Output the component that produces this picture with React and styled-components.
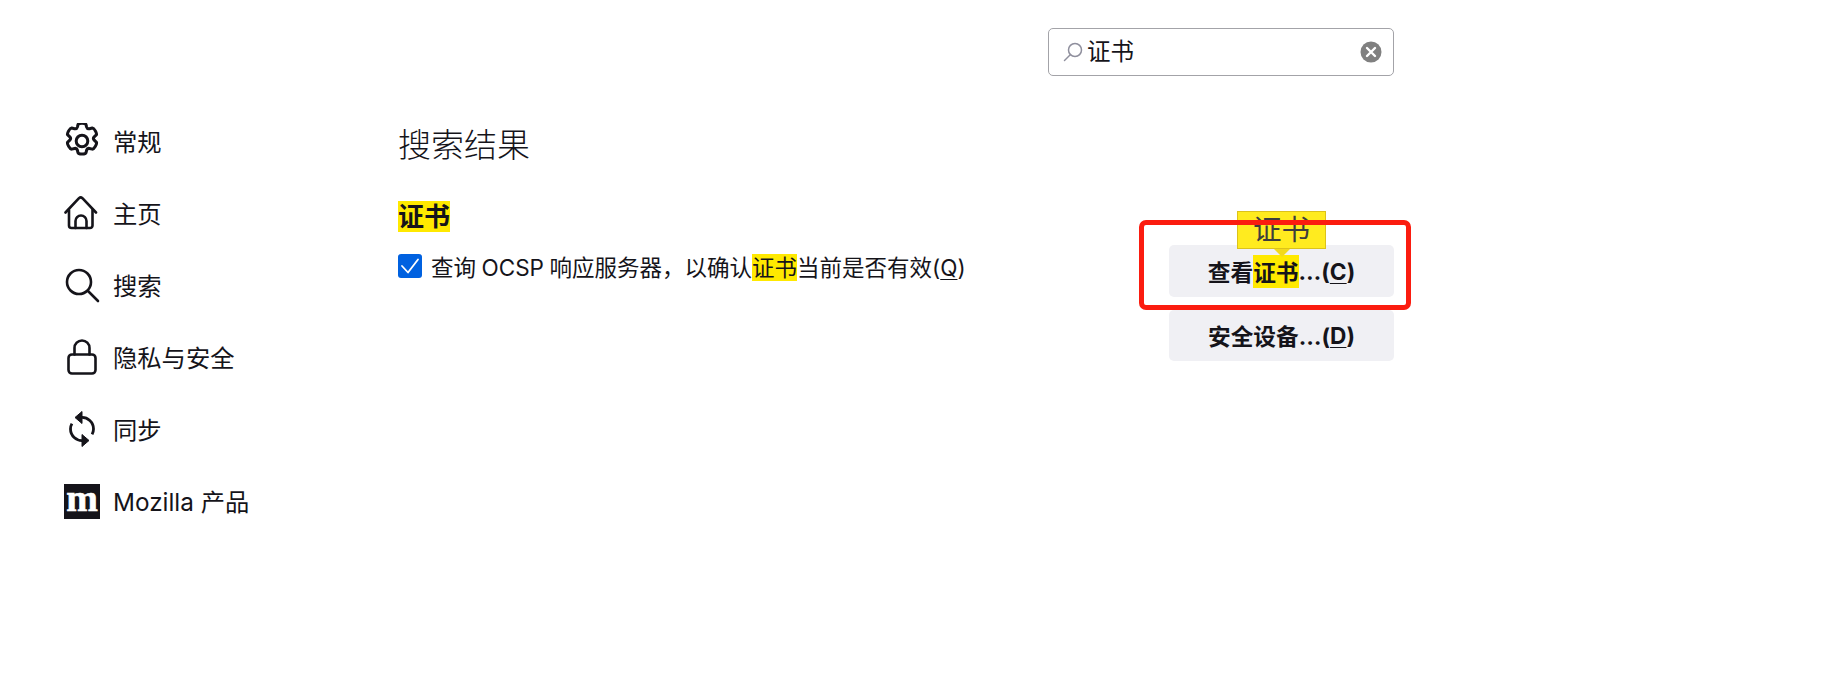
import React from 'react';
import styled, { createGlobalStyle } from 'styled-components';

const GlobalStyle = createGlobalStyle`
  html, body {
    margin: 0;
    padding: 0;
    background: #fff;
  }
  body {
    font-family: Inter, "Noto Sans CJK SC", sans-serif;
    color: #15141a;
  }
`;

const Page = styled.div`
  display: grid;
  grid-template-columns: 398px 996px;
  height: 684px;
  overflow: hidden;
`;

const Sidebar = styled.nav`
  display: flex;
  flex-direction: column;
  padding: 105px 0 0 64px;
`;

const NavItem = styled.div`
  display: flex;
  align-items: center;
  gap: 13px;
  height: 72px;
  font-size: 24.3px;
  white-space: nowrap;
`;

const NavLabel = styled.span`
  padding-bottom: 2px;
`;

const IconBox = styled.span`
  display: flex;
  align-items: center;
  justify-content: center;
  width: 36px;
  height: 36px;
  flex: none;
`;

const MozillaMark = styled.span`
  display: flex;
  justify-content: center;
  align-items: center;
  width: 36px;
  height: 35px;
  flex: none;
  background: #15141a;
  color: #fff;
  font-family: "Liberation Serif", serif;
  font-weight: 700;
  font-size: 38px;
  line-height: 30px;
  padding-bottom: 6px;
  box-sizing: border-box;
  -webkit-text-stroke: 0.6px #fff;
`;

const Main = styled.main`
  display: flex;
  flex-direction: column;
  padding-top: 28px;
`;

const SearchRow = styled.div`
  display: flex;
  justify-content: flex-end;
`;

const SearchBox = styled.div`
  display: flex;
  align-items: center;
  box-sizing: border-box;
  width: 346px;
  height: 48px;
  padding: 0 11px 0 14px;
  border: 1px solid #a3a3a8;
  border-radius: 5px;
  background: #fff;
`;

const SearchText = styled.span`
  flex: 1;
  margin-left: 4px;
  font-size: 23.5px;
  line-height: 44px;
`;

const Heading = styled.h1`
  margin: 45px 0 0;
  font-size: 33px;
  line-height: 48px;
  font-weight: 300;
`;

const ResultRow = styled.section`
  display: flex;
  justify-content: space-between;
  align-items: flex-start;
  margin-top: 31px;
`;

const ResultText = styled.div`
  display: flex;
  flex-direction: column;
`;

const SectionTitle = styled.h2`
  margin: 0;
  font-size: 26px;
  line-height: 33px;
  font-weight: 700;
`;

const Mark = styled.span`
  background: #ffe900;
`;

const CheckRow = styled.label`
  display: flex;
  align-items: center;
  gap: 9px;
  margin-top: 16px;
  height: 33px;
  font-size: 22.5px;
  word-spacing: -0.8px;
  white-space: nowrap;
`;

const CheckBox = styled.span`
  display: flex;
  align-items: center;
  justify-content: center;
  width: 24px;
  height: 24px;
  flex: none;
  border-radius: 3px;
  background: #0061e0;
`;

const Key = styled.span`
  text-decoration: underline;
  text-underline-offset: 3px;
  text-decoration-thickness: 1px;
`;

const ButtonColumn = styled.div`
  position: relative;
  display: flex;
  flex-direction: column;
  gap: 13px;
  width: 225px;
  margin-top: 45px;
`;

const ActionButton = styled.div`
  display: flex;
  align-items: center;
  justify-content: center;
  height: ${(p) => p.$height}px;
  border-radius: 5px;
  background: #f0f0f4;
  font-size: 22.7px;
  font-weight: 700;
  white-space: nowrap;
`;

const Tooltip = styled.div`
  position: absolute;
  left: 68px;
  top: -34px;
  box-sizing: border-box;
  width: 89px;
  height: 38px;
  background: #ffeb1f;
  border: 1px solid #dcc21a;
  color: #3d3d3d;
  font-size: 28.5px;
  line-height: 36px;
  text-align: center;
  white-space: nowrap;

  &::after {
    content: '';
    position: absolute;
    left: 36px;
    top: 37px;
    border: 8px solid transparent;
    border-bottom: 0;
    border-top-color: #f2d91c;
  }
`;

const RedFrame = styled.div`
  position: absolute;
  left: -30px;
  top: -25px;
  box-sizing: border-box;
  width: 272px;
  height: 90px;
  border: 5px solid #fb1c0f;
  border-radius: 7px;
`;

const Stroke = ({ children, box = '0 0 36 36' }) => (
  <svg width="36" height="36" viewBox={box} fill="none" stroke="#15141a" strokeWidth="2.6" strokeLinecap="round" strokeLinejoin="round">
    {children}
  </svg>
);

const GearIcon = () => (
  <Stroke box="2.5 2.5 31 31">
    <circle cx="18" cy="18" r="5" />
    <path d="M14.6 3.8c.4-1.4 6.4-1.4 6.8 0l.6 2.2c.3 1 1.4 1.6 2.4 1.4l2.5-.6c1.4-.3 4.5 5 3.4 6l-1.8 1.7c-.7.7-.7 2 0 2.8l1.8 1.7c1.1 1-2 6.3-3.4 6l-2.5-.6c-1-.2-2.1.4-2.4 1.4l-.6 2.4c-.4 1.4-6.4 1.4-6.8 0l-.6-2.4c-.3-1-1.4-1.6-2.4-1.4l-2.5.6c-1.4.3-4.5-5-3.4-6l1.8-1.7c.7-.8.7-2.1 0-2.8l-1.8-1.7c-1.1-1 2-6.3 3.4-6l2.5.6c1 .2 2.1-.4 2.4-1.4z" />
  </Stroke>
);

const HomeIcon = () => (
  <Stroke>
    <path d="M1.5 17.5 15 3.2a2.5 2.5 0 0 1 3.4 0L32 17.5" />
    <path d="M5 15v15.500a2.500 2.500 0 0 0 2.500 2.500h18.500a2.500 2.500 0 0 0 2.500-2.500V15" />
    <path d="M11.500 33V26a5.500 5.500 0 0 1 11 0v7" />
  </Stroke>
);

const SearchIcon = () => (
  <Stroke>
    <circle cx="15" cy="15" r="12" />
    <path d="m24 24 10 10" />
  </Stroke>
);

const LockIcon = () => (
  <Stroke>
    <rect x="4.500" y="15.500" width="27" height="19" rx="3.500" />
    <path d="M10.500 15.500V9a7.500 7.500 0 0 1 15 0v6.500" />
  </Stroke>
);

const SyncIcon = () => (
  <svg width="36" height="36" viewBox="0 0 36 36" fill="none" stroke="#15141a" strokeWidth="2.800" strokeLinecap="butt">
    <path d="M17 6.500A11.500 11.500 0 0 1 29.500 18c0 2-.5 3.800-1.400 5.400" />
    <path d="M19 29.500A11.500 11.500 0 0 1 6.500 18c0-2 .5-3.800 1.400-5.400" />
    <path d="M18 .5v12l-7-6z" fill="#15141a" stroke="#15141a" strokeWidth="1" strokeLinejoin="round" />
    <path d="M18 23.500v12l7-6z" fill="#15141a" stroke="#15141a" strokeWidth="1" strokeLinejoin="round" />
  </svg>
);

const navItems = [
  { label: '常规', icon: <GearIcon /> },
  { label: '主页', icon: <HomeIcon /> },
  { label: '搜索', icon: <SearchIcon /> },
  { label: '隐私与安全', icon: <LockIcon /> },
  { label: '同步', icon: <SyncIcon /> },
];

export default function App() {
  return (
    <>
      <GlobalStyle />
      <Page>
        <Sidebar>
          {navItems.map((item) => (
            <NavItem key={item.label}>
              <IconBox>{item.icon}</IconBox>
              <NavLabel>{item.label}</NavLabel>
            </NavItem>
          ))}
          <NavItem>
            <MozillaMark>m</MozillaMark>
            <NavLabel>Mozilla 产品</NavLabel>
          </NavItem>
        </Sidebar>
        <Main>
          <SearchRow>
            <SearchBox>
              <svg width="20" height="20" viewBox="0 0 20 20" fill="none" stroke="#8f8f9d" strokeWidth="1.500" strokeLinecap="round">
                <circle cx="12" cy="8" r="6.500" />
                <path d="M7.500 12.500 1.500 18.500" />
              </svg>
              <SearchText>证书</SearchText>
              <svg width="22" height="22" viewBox="0 0 22 22">
                <circle cx="11" cy="11" r="10.500" fill="#808080" />
                <path d="m7 7 8 8M15 7l-8 8" stroke="#fff" strokeWidth="2.400" strokeLinecap="round" />
              </svg>
            </SearchBox>
          </SearchRow>
          <Heading>搜索结果</Heading>
          <ResultRow>
            <ResultText>
              <SectionTitle><Mark>证书</Mark></SectionTitle>
              <CheckRow>
                <CheckBox>
                  <svg width="20" height="20" viewBox="0 0 20 20" fill="none" stroke="#fff" strokeWidth="1.800" strokeLinecap="round" strokeLinejoin="round">
                    <path d="m2 10 6 6.500L18 3.500" />
                  </svg>
                </CheckBox>
                <span>
                  查询 OCSP 响应服务器，以确认<Mark>证书</Mark>当前是否有效(<Key>Q</Key>)
                </span>
              </CheckRow>
            </ResultText>
            <ButtonColumn>
              <ActionButton $height={52}>
                查看<Mark>证书</Mark>…(<Key>C</Key>)
              </ActionButton>
              <ActionButton $height={51}>
                安全设备…(<Key>D</Key>)
              </ActionButton>
              <Tooltip>证书</Tooltip>
              <RedFrame />
            </ButtonColumn>
          </ResultRow>
        </Main>
      </Page>
    </>
  );
}
